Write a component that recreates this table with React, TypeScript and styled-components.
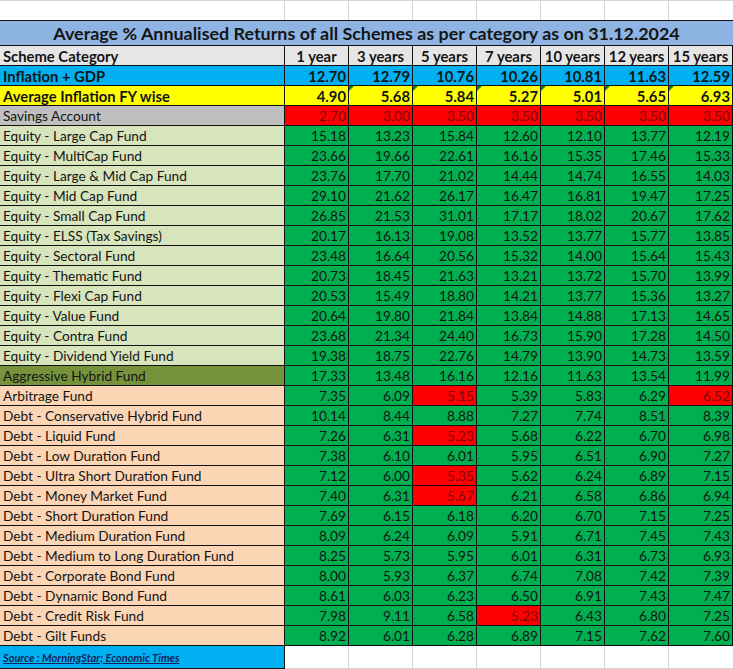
import React from "react";
import styled, { createGlobalStyle, css } from "styled-components";

const Global = createGlobalStyle`
  html, body { margin: 0; padding: 0; background: #ffffff; }
  body { font-family: Lato, "Open Sans", "Liberation Sans", sans-serif; color: #111; }
`;

type Tone = "blue" | "yellow" | "gray" | "red" | "green" | "equity" | "hybrid" | "debt" | "header" | "white";

const bg: Record<Tone, string> = {
  blue: "#00b0f0",
  yellow: "#ffff00",
  gray: "#bfbfbf",
  red: "#ff0000",
  green: "#00b050",
  equity: "#d8e4bc",
  hybrid: "#76933c",
  debt: "#fcd5b4",
  header: "#e7e6e6",
  white: "#ffffff",
};

const Sheet = styled.div`
  display: grid;
  grid-template-columns: 285px repeat(7, 64px);
  width: 733px;
`;

const Spacer = styled.div<{ $last?: boolean }>`
  height: 20px;
  box-sizing: border-box;
  border-top: 1px solid #d4d4d4;
  border-right: ${(p) => (p.$last ? "none" : "1px solid #d4d4d4")};
`;

const Title = styled.div`
  grid-column: 1 / -1;
  height: 26px;
  box-sizing: border-box;
  background: #8db4e2;
  border-top: 1px solid #111;
  border-bottom: 1px solid #111;
  display: flex;
  align-items: center;
  justify-content: center;
  font-weight: 700;
  font-size: 17.9px;
  color: #151515;
  white-space: nowrap;
`;

const Cell = styled.div<{ $tone: Tone; $num?: boolean; $bold?: boolean; $center?: boolean; $flag?: boolean }>`
  position: relative;
  height: 20px;
  box-sizing: border-box;
  border-right: 1px solid #111;
  border-bottom: 1px solid #111;
  background: ${(p) => bg[p.$tone]};
  display: flex;
  align-items: center;
  justify-content: ${(p) => (p.$center ? "center" : p.$num ? "flex-end" : "flex-start")};
  padding: 0 ${(p) => (p.$num ? "2px" : "3px")} 0 3px;
  font-size: ${(p) => (p.$bold ? "14.8px" : "13.7px")};
  font-weight: ${(p) => (p.$bold ? 700 : 400)};
  color: ${(p) => (p.$tone === "red" ? "#7a0a0a" : "#141414")};
  white-space: nowrap;
  overflow: hidden;
  ${(p) =>
    p.$flag &&
    css`
      &::before {
        content: "";
        position: absolute;
        left: 0;
        top: 0;
        border-top: 5px solid #1d7a2b;
        border-right: 5px solid transparent;
      }
    `}
`;

const SourceCell = styled.div`
  height: 23px;
  box-sizing: border-box;
  background: #00b0f0;
  border-right: 1px solid #111;
  border-bottom: 1px solid #111;
  display: flex;
  align-items: center;
  padding-left: 3px;
  font-size: 11px;
  font-weight: 700;
  font-style: italic;
  text-decoration: underline;
  color: #10245a;
`;

const BlankCell = styled.div<{ $last?: boolean }>`
  height: 23px;
  box-sizing: border-box;
  border-right: ${(p) => (p.$last ? "none" : "1px solid #d4d4d4")};
  border-bottom: 1px solid #d4d4d4;
`;

const years = ["1 year", "3 years", "5 years", "7 years", "10 years", "12 years", "15 years"];

type Row = { label: string; vals: string[]; label$: Tone; val$: Tone; bold?: boolean; red?: number[]; flags?: boolean };

const eq = (label: string, vals: string[]): Row => ({ label, vals, label$: "equity", val$: "green" });
const dt = (label: string, vals: string[], red: number[] = []): Row => ({ label, vals, label$: "debt", val$: "green", red });

const rows: Row[] = [
  { label: "Inflation + GDP", vals: ["12.70", "12.79", "10.76", "10.26", "10.81", "11.63", "12.59"], label$: "blue", val$: "blue", bold: true },
  { label: "Average Inflation FY wise", vals: ["4.90", "5.68", "5.84", "5.27", "5.01", "5.65", "6.93"], label$: "yellow", val$: "yellow", bold: true, flags: true },
  { label: "Savings Account", vals: ["2.70", "3.00", "3.50", "3.50", "3.50", "3.50", "3.50"], label$: "gray", val$: "red" },
  eq("Equity - Large Cap Fund", ["15.18", "13.23", "15.84", "12.60", "12.10", "13.77", "12.19"]),
  eq("Equity - MultiCap Fund", ["23.66", "19.66", "22.61", "16.16", "15.35", "17.46", "15.33"]),
  eq("Equity - Large & Mid Cap Fund", ["23.76", "17.70", "21.02", "14.44", "14.74", "16.55", "14.03"]),
  eq("Equity - Mid Cap Fund", ["29.10", "21.62", "26.17", "16.47", "16.81", "19.47", "17.25"]),
  eq("Equity - Small Cap Fund", ["26.85", "21.53", "31.01", "17.17", "18.02", "20.67", "17.62"]),
  eq("Equity - ELSS (Tax Savings)", ["20.17", "16.13", "19.08", "13.52", "13.77", "15.77", "13.85"]),
  eq("Equity - Sectoral Fund", ["23.48", "16.64", "20.56", "15.32", "14.00", "15.64", "15.43"]),
  eq("Equity - Thematic Fund", ["20.73", "18.45", "21.63", "13.21", "13.72", "15.70", "13.99"]),
  eq("Equity - Flexi Cap Fund", ["20.53", "15.49", "18.80", "14.21", "13.77", "15.36", "13.27"]),
  eq("Equity - Value Fund", ["20.64", "19.80", "21.84", "13.84", "14.88", "17.13", "14.65"]),
  eq("Equity - Contra Fund", ["23.68", "21.34", "24.40", "16.73", "15.90", "17.28", "14.50"]),
  eq("Equity - Dividend Yield Fund", ["19.38", "18.75", "22.76", "14.79", "13.90", "14.73", "13.59"]),
  { label: "Aggressive Hybrid Fund", vals: ["17.33", "13.48", "16.16", "12.16", "11.63", "13.54", "11.99"], label$: "hybrid", val$: "green" },
  dt("Arbitrage Fund", ["7.35", "6.09", "5.15", "5.39", "5.83", "6.29", "6.52"], [2, 6]),
  dt("Debt - Conservative Hybrid Fund", ["10.14", "8.44", "8.88", "7.27", "7.74", "8.51", "8.39"]),
  dt("Debt - Liquid Fund", ["7.26", "6.31", "5.23", "5.68", "6.22", "6.70", "6.98"], [2]),
  dt("Debt - Low Duration Fund", ["7.38", "6.10", "6.01", "5.95", "6.51", "6.90", "7.27"]),
  dt("Debt - Ultra Short Duration Fund", ["7.12", "6.00", "5.35", "5.62", "6.24", "6.89", "7.15"], [2]),
  dt("Debt - Money Market Fund", ["7.40", "6.31", "5.67", "6.21", "6.58", "6.86", "6.94"], [2]),
  dt("Debt - Short Duration Fund", ["7.69", "6.15", "6.18", "6.20", "6.70", "7.15", "7.25"]),
  dt("Debt - Medium Duration Fund", ["8.09", "6.24", "6.09", "5.91", "6.71", "7.45", "7.43"]),
  dt("Debt - Medium to Long Duration Fund", ["8.25", "5.73", "5.95", "6.01", "6.31", "6.73", "6.93"]),
  dt("Debt - Corporate Bond Fund", ["8.00", "5.93", "6.37", "6.74", "7.08", "7.42", "7.39"]),
  dt("Debt - Dynamic Bond Fund", ["8.61", "6.03", "6.23", "6.50", "6.91", "7.43", "7.47"]),
  dt("Debt - Credit Risk Fund", ["7.98", "9.11", "6.58", "5.23", "6.43", "6.80", "7.25"], [3]),
  dt("Debt - Gilt Funds", ["8.92", "6.01", "6.28", "6.89", "7.15", "7.62", "7.60"]),
];

export default function App() {
  return (
    <>
      <Global />
      <Sheet>
        {Array.from({ length: 8 }).map((_, i) => (
          <Spacer key={`s${i}`} $last={i === 7} />
        ))}
        <Title>Average % Annualised Returns of all Schemes as per category as on 31.12.2024</Title>
        <Cell $tone="header" $bold>Scheme Category</Cell>
        {years.map((y) => (
          <Cell key={y} $tone="header" $bold $center>
            {y}
          </Cell>
        ))}
        {rows.map((r) => (
          <React.Fragment key={r.label}>
            <Cell $tone={r.label$} $bold={r.bold}>
              {r.label}
            </Cell>
            {r.vals.map((v, i) => (
              <Cell
                key={i}
                $tone={r.red && r.red.includes(i) ? "red" : r.val$}
                $num
                $bold={r.bold}
                $flag={r.flags && i > 0}
              >
                {v}
              </Cell>
            ))}
          </React.Fragment>
        ))}
        <SourceCell>Source : MorningStar; Economic Times</SourceCell>
        {Array.from({ length: 7 }).map((_, i) => (
          <BlankCell key={`b${i}`} $last={i === 6} />
        ))}
      </Sheet>
    </>
  );
}
